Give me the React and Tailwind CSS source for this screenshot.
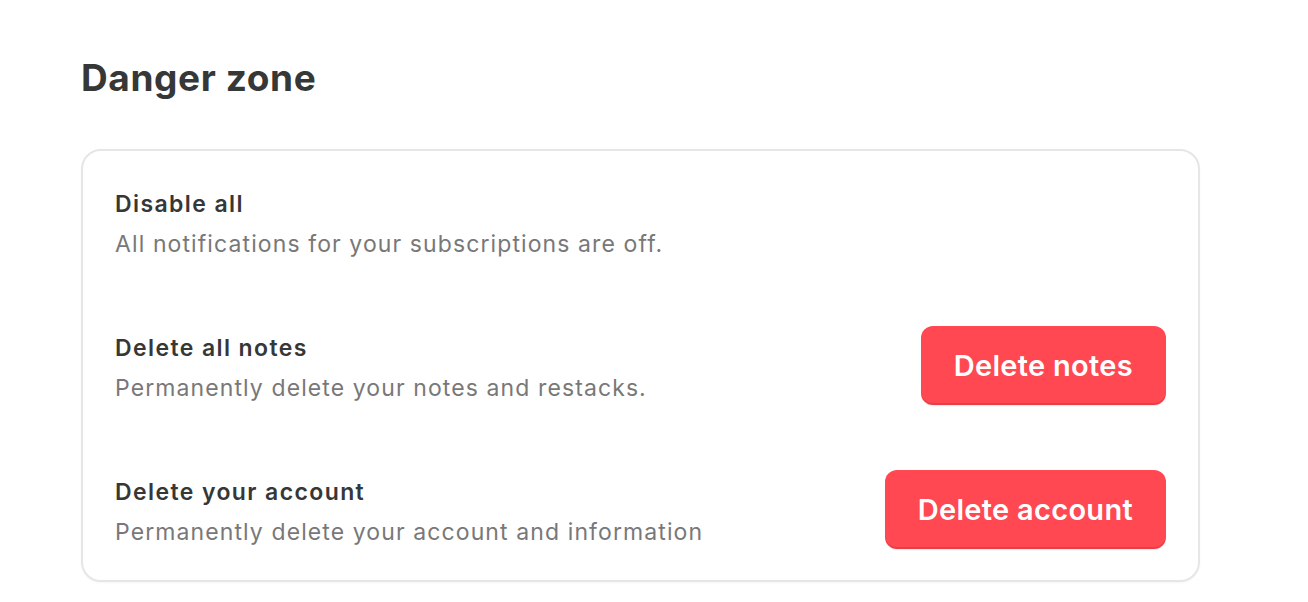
export default function App() {
  const rows = [
    { title: "Disable all", desc: "All notifications for your subscriptions are off.", btn: null },
    { title: "Delete all notes", desc: "Permanently delete your notes and restacks.", btn: "Delete notes" },
    { title: "Delete your account", desc: "Permanently delete your account and information", btn: "Delete account" },
  ];
  return (
    <div className="min-h-screen bg-white" style={{ fontFamily: "Inter, 'Noto Sans', sans-serif" }}>
      <div className="pl-[81px] pt-[58px] w-[1200px]">
        <h1 className="text-[37px] leading-[40px] font-bold text-[#363737] tracking-[0.6px]">Danger zone</h1>
        <div className="mt-[51px] border-2 border-[#e6e6e6] rounded-[20px] px-[32px] py-[31px] flex flex-col gap-[65px] shadow-[0_1px_2px_rgba(0,0,0,0.04)]">
          {rows.map((r) => (
            <div key={r.title} className="h-[79px] flex items-center justify-between">
              <div className="flex flex-col pt-[4px]">
                <div className="text-[23px] leading-[30px] font-semibold text-[#363737] tracking-[1.4px]">{r.title}</div>
                <div className="mt-[10px] text-[23px] leading-[30px] text-[#787878] tracking-[1.1px]">{r.desc}</div>
              </div>
              {r.btn && (
                <button className="h-[79px] px-[33px] rounded-[12px] bg-[#ff4852] text-white text-[29px] font-semibold tracking-[0.3px] shadow-[inset_0_-2px_0_rgba(0,0,0,0.1),0_1px_1px_rgba(0,0,0,0.08)]">
                  {r.btn}
                </button>
              )}
            </div>
          ))}
        </div>
      </div>
    </div>
  );
}
